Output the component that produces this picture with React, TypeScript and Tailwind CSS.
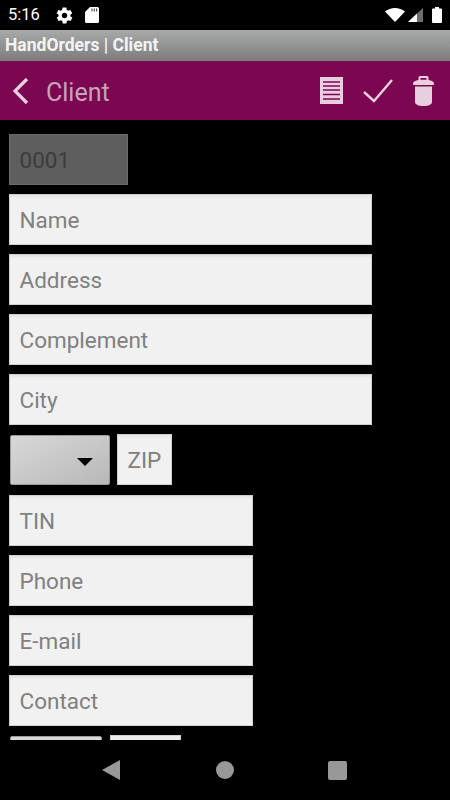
import type { ReactNode } from 'react'

const FIELD = 'flex h-[51px] shrink-0 items-center border border-[#d0d0d0] bg-[#f1f1f1] pt-[2px] pl-[9.5px] text-[22.5px] text-[#808080] shadow-[inset_0_3px_3px_-1px_#e4e4e4]'

function Field({ width, children }: { width: string; children: ReactNode }) {
  return <div className={`${FIELD} ${width}`}>{children}</div>
}

function StatusBar() {
  return (
    <div className="flex h-[30px] shrink-0 items-center bg-black pr-[8px] pl-2 text-white">
      <span className="mt-px text-[16.5px] leading-none">5:16</span>
      <svg className="ml-[15px] h-[19px] w-[19px]" viewBox="0 0 24 24" fill="#fff">
        <path d="M19.4 13c0-.3.1-.6.1-1s0-.7-.1-1l2.1-1.6c.2-.2.2-.4.1-.6l-2-3.5c-.1-.2-.4-.3-.6-.2l-2.5 1c-.5-.4-1.1-.7-1.7-1l-.4-2.7c0-.2-.2-.4-.5-.4h-4c-.2 0-.5.2-.5.4l-.4 2.7c-.6.2-1.1.6-1.7 1l-2.5-1c-.2-.1-.5 0-.6.2l-2 3.5c-.1.2-.1.5.1.6L4.6 11c0 .3-.1.6-.1 1s0 .7.1 1l-2.1 1.6c-.2.2-.2.4-.1.6l2 3.5c.1.2.4.3.6.2l2.5-1c.5.4 1.1.7 1.7 1l.4 2.7c0 .2.2.4.5.4h4c.2 0 .5-.2.5-.4l.4-2.7c.6-.2 1.2-.6 1.7-1l2.5 1c.2.1.5 0 .6-.2l2-3.5c.1-.2.1-.5-.1-.6L19.4 13zM12 15.5c-1.9 0-3.500-1.600-3.500-3.500s1.600-3.500 3.500-3.500 3.500 1.600 3.500 3.500-1.600 3.500-3.500 3.500z" />
      </svg>
      <svg className="ml-[11px] h-[16px] w-[14px]" viewBox="0 0 14 16" fill="#fff">
        <path d="M5 0h7.500A1.500 1.500 0 0 1 14 1.500v13a1.500 1.500 0 0 1-1.500 1.500h-11A1.500 1.500 0 0 1 0 14.500V5z" />
        <path d="M7 1.500v3M9.300 1.500v3M11.600 1.500v3" stroke="#000" strokeWidth="0.8" />
      </svg>
      <div className="flex-1" />
      <svg className="h-[14px] w-[20px]" viewBox="0 0 20 14" fill="#fff">
        <path d="M0 3.500C2.800 1.300 6.200 0 10 0s7.200 1.300 10 3.500L10 14z" />
      </svg>
      <svg className="ml-[3px] h-[14px] w-[15px]" viewBox="0 0 15 14">
        <path d="M0 14L15 0v14z" fill="#6e6e6e" />
        <path d="M0 14L9 5.600V14z" fill="#fff" />
      </svg>
      <svg className="ml-[9px] h-[16px] w-[10px]" viewBox="0 0 10 16" fill="#fff">
        <path d="M3 0h4v1.500h2a1 1 0 0 1 1 1V15a1 1 0 0 1-1 1H1a1 1 0 0 1-1-1V2.500a1 1 0 0 1 1-1h2z" />
      </svg>
    </div>
  )
}

function AppBar() {
  return (
    <div className="flex h-[59px] shrink-0 items-center bg-[#7a074f] text-[#e8cfe0]">
      <svg className="ml-[12px] h-[28px] w-[17px]" viewBox="0 0 17 28" fill="none" stroke="#e8cfe0" strokeWidth="3.200">
        <path d="M15 2L3 14l12 12" />
      </svg>
      <span className="mt-[3px] ml-[17px] text-[25px] leading-none text-[#c9a3bb]">Client</span>
      <div className="flex-1" />
      <svg className="h-[27px] w-[23px]" viewBox="0 0 23 27">
        <rect width="23" height="27" fill="#e8cfe0" />
        <path d="M3 5h17M3 9h17M3 13h17M3 17.500h17M3 22h17" stroke="#7a074f" strokeWidth="1.300" />
      </svg>
      <svg className="ml-[20px] h-[24px] w-[30px]" viewBox="0 0 30 24" fill="none" stroke="#e8cfe0" strokeWidth="2.400">
        <path d="M1 13l10 9L29 1" />
      </svg>
      <svg className="mr-[16px] ml-[20px] h-[30px] w-[21px]" viewBox="0 0 21 30" fill="#e8cfe0">
        <path d="M7 0h7a1.500 1.500 0 0 1 1.500 1.500V4C18.500 4.500 21 5.600 21 7.500c0 1-.5 1.500-1 1.500H1C.5 9 0 8.500 0 7.500 0 5.600 2.500 4.500 5.500 4V1.500A1.500 1.500 0 0 1 7 0zm.500 2v1.800h6V2z" />
        <path d="M2 10.500h17V26c0 2.500-3.500 4-8.500 4S2 28.500 2 26z" />
      </svg>
    </div>
  )
}

function NavBar() {
  return (
    <div className="flex h-[60px] shrink-0 items-center bg-black">
      <svg className="ml-[102px] h-[20px] w-[18px]" viewBox="0 0 18 20" fill="#989898">
        <path d="M18 0v20L0 10z" />
      </svg>
      <div className="ml-[96px] h-[18px] w-[18px] rounded-full bg-[#989898]" />
      <div className="ml-[94px] h-[19px] w-[19px] rounded-[2px] bg-[#989898]" />
    </div>
  )
}

export default function App() {
  return (
    <div className="flex h-[800px] w-[450px] flex-col overflow-hidden bg-black font-['Roboto',sans-serif]">
      <StatusBar />
      <div className="flex h-[31px] shrink-0 items-center bg-gradient-to-b from-[#a8aaa9] to-[#7c7c7c] pl-[5px] text-[17.5px] font-bold text-[#f4f4f4]">
        HandOrders | Client
      </div>
      <AppBar />
      <div className="flex min-h-0 flex-1 flex-col overflow-hidden pt-[14px] pl-[9px]">
        <div className="flex h-[51px] w-[119px] shrink-0 items-center border border-[#6a6a6a] bg-[#5e5e5e] pt-[2px] pl-[9.5px] text-[22.5px] text-[#3c3c3c]">
          0001
        </div>
        <div className="mt-[9px] flex flex-col gap-[9px]">
          <Field width="w-[363px]">Name</Field>
          <Field width="w-[363px]">Address</Field>
          <Field width="w-[363px]">Complement</Field>
          <Field width="w-[363px]">City</Field>
        </div>
        <div className="mt-[9px] flex shrink-0 items-end gap-[7px] pl-px">
          <div className="relative h-[50px] w-[100px] rounded-[2px] border border-[#9a9a9a] bg-gradient-to-br from-[#d8d8d8] to-[#b8b8b8]">
            <div className="absolute top-[22px] left-[66px] h-0 w-0 border-x-[8px] border-t-[8px] border-x-transparent border-t-black" />
          </div>
          <Field width="w-[55px]">ZIP</Field>
        </div>
        <div className="mt-[10px] flex flex-col gap-[9px]">
          <Field width="w-[244px]">TIN</Field>
          <Field width="w-[244px]">Phone</Field>
          <Field width="w-[244px]">E-mail</Field>
          <Field width="w-[244px]">Contact</Field>
        </div>
        <div className="mt-[9px] flex shrink-0 items-start gap-[8px] pl-px">
          <div className="mt-px h-[50px] w-[92px] rounded-[2px] border border-[#9a9a9a] bg-[#d8d8d8]" />
          <div className="h-[51px] w-[71px] border border-[#d0d0d0] bg-[#ececec]" />
        </div>
      </div>
      <NavBar />
    </div>
  )
}
